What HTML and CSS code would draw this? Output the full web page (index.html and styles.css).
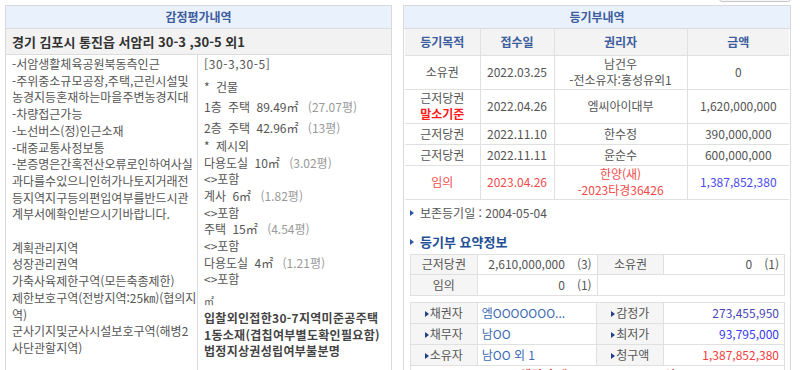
FILE: index.html
```html
<!DOCTYPE html>
<html lang="ko">
<head>
<meta charset="utf-8">
<title>감정평가내역</title>
<link rel="stylesheet" href="styles.css">
</head>
<body>
<div class="page">
  <section class="panel left">
    <div class="ptitle">감정평가내역</div>
    <div class="addr">경기 김포시 통진읍 서암리 30-3 ,30-5 외1</div>
    <div class="cols">
      <div class="col col-a">
        <div>-서암생활체육공원북동측인근</div>
        <div>-주위중소규모공장,주택,근린시설및</div>
        <div>농경지등혼재하는마을주변농경지대</div>
        <div>-차량접근가능</div>
        <div>-노선버스(정)인근소재</div>
        <div>-대중교통사정보통</div>
        <div>-본증명은간혹전산오류로인하여사실</div>
        <div>과다를수있으니인허가나토지거래전</div>
        <div>등지역지구등의편입여부를반드시관</div>
        <div>계부서에확인받으시기바랍니다.</div>
        <div class="blank"></div>
        <div>계획관리지역</div>
        <div>성장관리권역</div>
        <div>가축사육제한구역(모든축종제한)</div>
        <div>제한보호구역(전방지역:25㎞)(협의지</div>
        <div>역)</div>
        <div>군사기지및군사시설보호구역(해병2</div>
        <div>사단관할지역)</div>
      </div>
      <div class="col col-b">
        <div class="lot">[30-3,30-5]</div>
        <div class="g6">* 건물</div>
        <div class="g4">1층 주택 89.49㎡ <span class="sub">(27.07평)</span></div>
        <div class="g4">2층 주택 42.96㎡ <span class="sub">(13평)</span></div>
        <div class="g1">* 제시외</div>
        <div>다용도실 10㎡ <span class="sub">(3.02평)</span></div>
        <div>&lt;&gt;포함</div>
        <div>계사 6㎡ <span class="sub">(1.82평)</span></div>
        <div>&lt;&gt;포함</div>
        <div>주택 15㎡ <span class="sub">(4.54평)</span></div>
        <div>&lt;&gt;포함</div>
        <div>다용도실 4㎡ <span class="sub">(1.21평)</span></div>
        <div>&lt;&gt;포함</div>
        <div class="g5 small">㎡</div>
        <div class="b">입찰외인접한30-7지역미준공주택</div>
        <div class="b">1동소재(겹칩여부별도확인필요함)</div>
        <div class="b">법정지상권성립여부불분명</div>
      </div>
    </div>
  </section>

  <div class="rightcol">
    <div class="toolbar"><span class="btn"></span></div>
    <section class="panel right">
      <div class="ptitle">등기부내역</div>
      <table class="reg">
        <colgroup><col class="c1"><col class="c2"><col class="c3"><col class="c4"></colgroup>
        <thead>
          <tr><th>등기목적</th><th>접수일</th><th>권리자</th><th>금액</th></tr>
        </thead>
        <tbody>
          <tr class="tall"><td>소유권</td><td>2022.03.25</td><td>남건우<br>-전소유자:홍성유외1</td><td>0</td></tr>
          <tr class="tall"><td>근저당권<br><span class="malso">말소기준</span></td><td>2022.04.26</td><td>엠씨아이대부</td><td>1,620,000,000</td></tr>
          <tr><td>근저당권</td><td>2022.11.10</td><td>한수정</td><td>390,000,000</td></tr>
          <tr><td>근저당권</td><td>2022.11.11</td><td>윤순수</td><td>600,000,000</td></tr>
          <tr class="tall red"><td>임의</td><td>2023.04.26</td><td>한양(새)<br>-2023타경36426</td><td class="amt">1,387,852,380</td></tr>
        </tbody>
      </table>
      <div class="note"><span class="tri"></span>보존등기일 : 2004-05-04</div>
      <div class="subtitle"><span class="tri"></span>등기부 요약정보</div>
      <table class="sum sum1">
        <colgroup><col class="s1"><col class="s2"><col class="s3"><col class="s4"></colgroup>
        <tr><th>근저당권</th><td class="num">2,610,000,000<span class="cnt">(3)</span></td><th>소유권</th><td class="num">0<span class="cnt">(1)</span></td></tr>
        <tr><th>임의</th><td class="num">0<span class="cnt">(1)</span></td><td colspan="2"></td></tr>
      </table>
      <table class="sum sum2">
        <colgroup><col class="s1"><col class="s2"><col class="s3"><col class="s4"></colgroup>
        <tr><th><span class="mini"></span>채권자</th><td class="who">엠OOOOOOO...</td><th><span class="mini"></span>감정가</th><td class="num v1">273,455,950</td></tr>
        <tr><th><span class="mini"></span>채무자</th><td class="who">남OO</td><th><span class="mini"></span>최저가</th><td class="num v2">93,795,000</td></tr>
        <tr><th><span class="mini"></span>소유자</th><td class="who">남OO 외 1</td><th><span class="mini"></span>청구액</th><td class="num v3">1,387,852,380</td></tr>
        <tr><td colspan="4" class="total">채권 총액 : 2,610,000,000 원</td></tr>
      </table>
    </section>
  </div>
</div>
</body>
</html>
```

FILE: styles.css
```css
* { box-sizing: border-box; }
html, body { margin: 0; padding: 0; background: #fff; }
body {
  font-family: "Noto Sans CJK KR", "Noto Sans", sans-serif;
  font-size: 12px;
  color: #555;
  overflow: hidden;
}
.page {
  display: flex;
  align-items: flex-start;
  gap: 11px;
  padding: 5px 0 0 5px;
}
.panel {
  width: 387px;
  border: 1px solid #d9d9d9;
  padding: 0;
  background: #fff;
}
.ptitle {
  height: 23px;
  line-height: 22px;
  background: #e9f1fc;
  border-bottom: 1px solid #dcdcdc;
  color: #3d5d9e;
  font-weight: bold;
  text-align: center;
  font-size: 12px;
}
.addr {
  height: 26px;
  line-height: 25px;
  background: #f2f2f2;
  border-bottom: 1px solid #dcdcdc;
  color: #333;
  font-weight: bold;
  font-size: 13px;
  padding-left: 6px;
}
.cols {
  display: grid;
  grid-template-columns: 192px 1fr;
  min-height: 340px;
}
.col { line-height: 16.7px; padding: 1px 0 0 6px; white-space: nowrap; }
.col-a { border-right: 1px solid #dcdcdc; letter-spacing: 0; overflow: hidden; }
.col-b { letter-spacing: 0; word-spacing: 3px; }
.lot { letter-spacing: 0.6px; }
.blank { height: 16.7px; }
.g6 { margin-top: 6px; }
.g4 { margin-top: 4px; }
.g5 { margin-top: 5px; }
.g1 { margin-top: 1px; }
.sub { color: #999; margin-left: 3px; }
.small { font-size: 10px; }
.b { font-weight: bold; color: #444; letter-spacing: 0.3px; }

.rightcol { display: flex; flex-direction: column; margin-top: -23px; }
.toolbar { display: flex; justify-content: flex-end; height: 20px; margin-bottom: 3px; }
.btn {
  width: 72px; height: 20px;
  border: 1px solid #c8c8c8; border-radius: 3px;
  background: #f7f7f7;
}
.right { width: 388px; padding-bottom: 40px; }

.reg {
  border-collapse: collapse;
  margin: 0 1px 0 1px;
  width: 384px;
}
.reg col.c1 { width: 75px; }
.reg col.c2 { width: 74px; }
.reg col.c3 { width: 133px; }
.reg col.c4 { width: 102px; }
.reg th, .reg td {
  border: 1px solid #e0e0e0;
  text-align: center;
  padding: 0;
  line-height: 16px;
}
.reg tr:first-child th { border-top: 0; }
.reg th:first-child, .reg td:first-child { border-left: 0; }
.reg th:last-child, .reg td:last-child { border-right: 0; }
.reg th {
  height: 26px;
  background: #f3f3f3;
  color: #3d5d9e;
  font-weight: bold;
}
.reg td { height: 21px; }
.reg tr.tall td { height: 34px; }
.malso { color: #ff1a1a; font-weight: bold; }
.reg tr.red td { color: #f24a4a; }
.reg tr.red td.amt { color: #4a4af0; }

.note {
  display: flex; align-items: center;
  height: 26px; padding-left: 6px;
}
.tri {
  width: 0; height: 0;
  border-left: 4px solid #2b56a6;
  border-top: 3px solid transparent;
  border-bottom: 3px solid transparent;
  margin-right: 6px;
}
.subtitle {
  display: flex; align-items: center;
  height: 20px; margin-top: 6px; padding-left: 6px;
  font-weight: bold; font-size: 13px; color: #234e93;
}
.sum {
  border-collapse: collapse;
  margin: 0 4px 0 6px;
  width: 375px;
}
.sum1 { margin-top: 2px; }
.sum col.s1 { width: 67px; }
.sum col.s2 { width: 120px; }
.sum col.s3 { width: 67px; }
.sum col.s4 { width: 121px; }
.sum th, .sum td {
  border: 1px solid #e0e0e0;
  height: 20.5px;
  padding: 0;
  line-height: 16px;
}
.sum th { background: #f5f5f5; font-weight: normal; color: #555; text-align: center; }
.sum td.num { text-align: right; padding-right: 5px; }
.cnt { margin-left: 12px; }
.sum2 { margin-top: 6px; }
.sum2 th, .sum2 td { height: 21px; }
.mini {
  display: inline-block; width: 0; height: 0;
  border-left: 4px solid #1f3f86;
  border-top: 3px solid transparent;
  border-bottom: 3px solid transparent;
  margin-right: 1px; vertical-align: 1px;
}
.who { color: #3a69b3; padding-left: 4px !important; }
.v1 { color: #4747b8; }
.v2 { color: #3838f0; }
.v3 { color: #f23b3b; }
.sum2 td.total {
  text-align: center; color: #e02020; font-weight: bold;
  height: 22px; vertical-align: top; padding-top: 1px;
}
```
